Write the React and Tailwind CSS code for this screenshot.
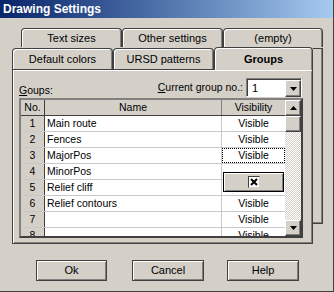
import React from "react";

const rows = [
  { no: "1", name: "Main route", vis: "Visible" },
  { no: "2", name: "Fences", vis: "Visible" },
  { no: "3", name: "MajorPos", vis: "Visible", focus: true },
  { no: "4", name: "MinorPos", vis: "" },
  { no: "5", name: "Relief cliff", vis: "" },
  { no: "6", name: "Relief contours", vis: "Visible" },
  { no: "7", name: "", vis: "Visible" },
  { no: "8", name: "", vis: "Visible" },
];

const Tab = ({ label, w, selected, h }) => (
  <div
    className={`${w} ${h} flex items-center justify-center border-t border-l border-r border-[#404040] rounded-t-[4px] bg-[#d4d0c8] shadow-[inset_1px_1px_#fff,inset_-1px_0_#808080] text-[11px] ${
      selected ? "font-bold -mb-px relative" : ""
    }`}
  >
    {label}
  </div>
);

const Arrow = ({ down }) => (
  <svg width="7" height="4" viewBox="0 0 7 4">
    <path d={down ? "M0 0h7L3.5 4z" : "M0 4h7L3.5 0z"} fill="#000" />
  </svg>
);

const RaisedBtn = ({ children, className }) => (
  <div
    className={`flex items-center justify-center bg-[#d4d0c8] border border-t-white border-l-white border-r-[#404040] border-b-[#404040] shadow-[inset_-1px_-1px_#808080] ${className}`}
  >
    {children}
  </div>
);

export default function App() {
  return (
    <div className="w-[334px] h-[292px] bg-[#d4d0c8] border-r border-b border-[#404040] font-['Liberation_Sans',Arial,sans-serif] text-black overflow-hidden">
      <div className="h-[18px] bg-linear-to-r from-[#0a246a] to-[#a6caf0] pl-[3px] text-[12px] font-bold text-white leading-[18px]">
        Drawing Settings
      </div>
      <div className="pl-[12px] pt-[10px]">
        <div className="ml-[9px] flex h-[19px]">
          <Tab label="Text sizes" w="w-[101px]" h="h-[19px]" />
          <Tab label="Other settings" w="w-[101px]" h="h-[19px]" />
          <Tab label="(empty)" w="w-[100px]" h="h-[19px]" />
        </div>
        <div className="flex">
          <div className="w-[301px]">
            <div className="flex items-end h-[22px]">
              <Tab label="Default colors" w="w-[101px]" h="h-[21px]" />
              <Tab label="URSD patterns" w="w-[101px]" h="h-[21px]" />
              <Tab label="Groups" w="w-[99px]" h="h-[23px]" selected />
            </div>
            <div className="h-[175px] border border-[#404040] shadow-[inset_1px_1px_#fff,inset_-1px_-1px_#808080] px-[6px] text-[10.5px]">
              <div className="flex h-[28px] pt-[8px]">
                <span className="mt-[5px] leading-[14px] h-[14px]">
                  <span className="underline">G</span>oups:
                </span>
                <span className="ml-auto mt-[2px] leading-[14px] h-[14px] mr-[3px]">
                  <span className="underline">C</span>urrent group no.:
                </span>
                <div className="w-[56px] h-[19px] mr-[4px] flex bg-white border border-t-[#808080] border-l-[#808080] border-r-white border-b-white shadow-[inset_1px_1px_#404040]">
                  <span className="flex-1 pl-[5px] pt-[2px] text-[11px] leading-[14px]">1</span>
                  <RaisedBtn className="w-[16px] h-[17px] mt-px">
                    <Arrow down />
                  </RaisedBtn>
                </div>
              </div>
              <div className="relative w-[284px] h-[140px] border-2 border-t-[#808080] border-l-[#808080] border-r-[#404040] border-b-[#404040] flex bg-white">
                <div className="w-[264px] h-[136px] overflow-hidden">
                  <div className="flex h-[16px] bg-[#d4d0c8] border-b border-[#404040]">
                    <div className="w-[24px] text-center leading-[15px] border-r border-[#404040]">No.</div>
                    <div className="w-[177px] text-center leading-[15px] border-r border-[#808080]">Name</div>
                    <div className="w-[63px] text-center leading-[15px]">Visibility</div>
                  </div>
                  {rows.map((r) => (
                    <div key={r.no} className="flex h-[16px] border-b border-[#c8c8c8]">
                      <div className="w-[24px] bg-[#d4d0c8] text-center leading-[15px] border-r border-[#404040]">{r.no}</div>
                      <div className="w-[177px] pl-[2px] leading-[15px] border-r border-[#c8c8c8]">{r.name}</div>
                      <div className={`w-[63px] text-center leading-[13px] ${r.focus ? "border border-dotted border-black" : "leading-[15px]"}`}>
                        {r.vis}
                      </div>
                    </div>
                  ))}
                </div>
                <div className="w-[16px] h-[136px] flex flex-col bg-[repeating-conic-gradient(#ffffff_0_25%,#d4d0c8_0_50%)] bg-[length:2px_2px]">
                  <RaisedBtn className="w-[16px] h-[16px]">
                    <Arrow />
                  </RaisedBtn>
                  <RaisedBtn className="w-[16px] h-[16px]" />
                  <div className="flex-1" />
                  <RaisedBtn className="w-[16px] h-[16px]">
                    <Arrow down />
                  </RaisedBtn>
                </div>
                <div className="absolute left-[202px] top-[72px] w-[61px] h-[20px] bg-[#d4d0c8] border border-black shadow-[inset_1px_1px_#fff,inset_-1px_-1px_#808080] flex items-center justify-center">
                  <div className="w-[12px] h-[12px] bg-white border border-t-[#404040] border-l-[#404040] border-r-[#d4d0c8] border-b-[#d4d0c8] flex items-center justify-center">
                    <svg width="8" height="8" viewBox="0 0 8 8">
                      <path d="M1 1L7 7M7 1L1 7" stroke="#000" strokeWidth="2" />
                    </svg>
                  </div>
                </div>
              </div>
            </div>
          </div>
          <div className="w-[10px] h-[176px] mt-[1px] border-t border-r border-b border-[#404040] shadow-[inset_-1px_-1px_#808080]" />
        </div>
        <div className="flex mt-[16px] text-[11px]">
          <div className="ml-[24px] w-[71px] h-[21px] flex items-center justify-center border border-[#404040] shadow-[inset_1px_1px_#fff,inset_-1px_-1px_#808080]">Ok</div>
          <div className="ml-[25px] w-[72px] h-[21px] flex items-center justify-center border border-[#404040] shadow-[inset_1px_1px_#fff,inset_-1px_-1px_#808080]">Cancel</div>
          <div className="ml-[23px] w-[72px] h-[21px] flex items-center justify-center border border-[#404040] shadow-[inset_1px_1px_#fff,inset_-1px_-1px_#808080]">Help</div>
        </div>
      </div>
    </div>
  );
}
